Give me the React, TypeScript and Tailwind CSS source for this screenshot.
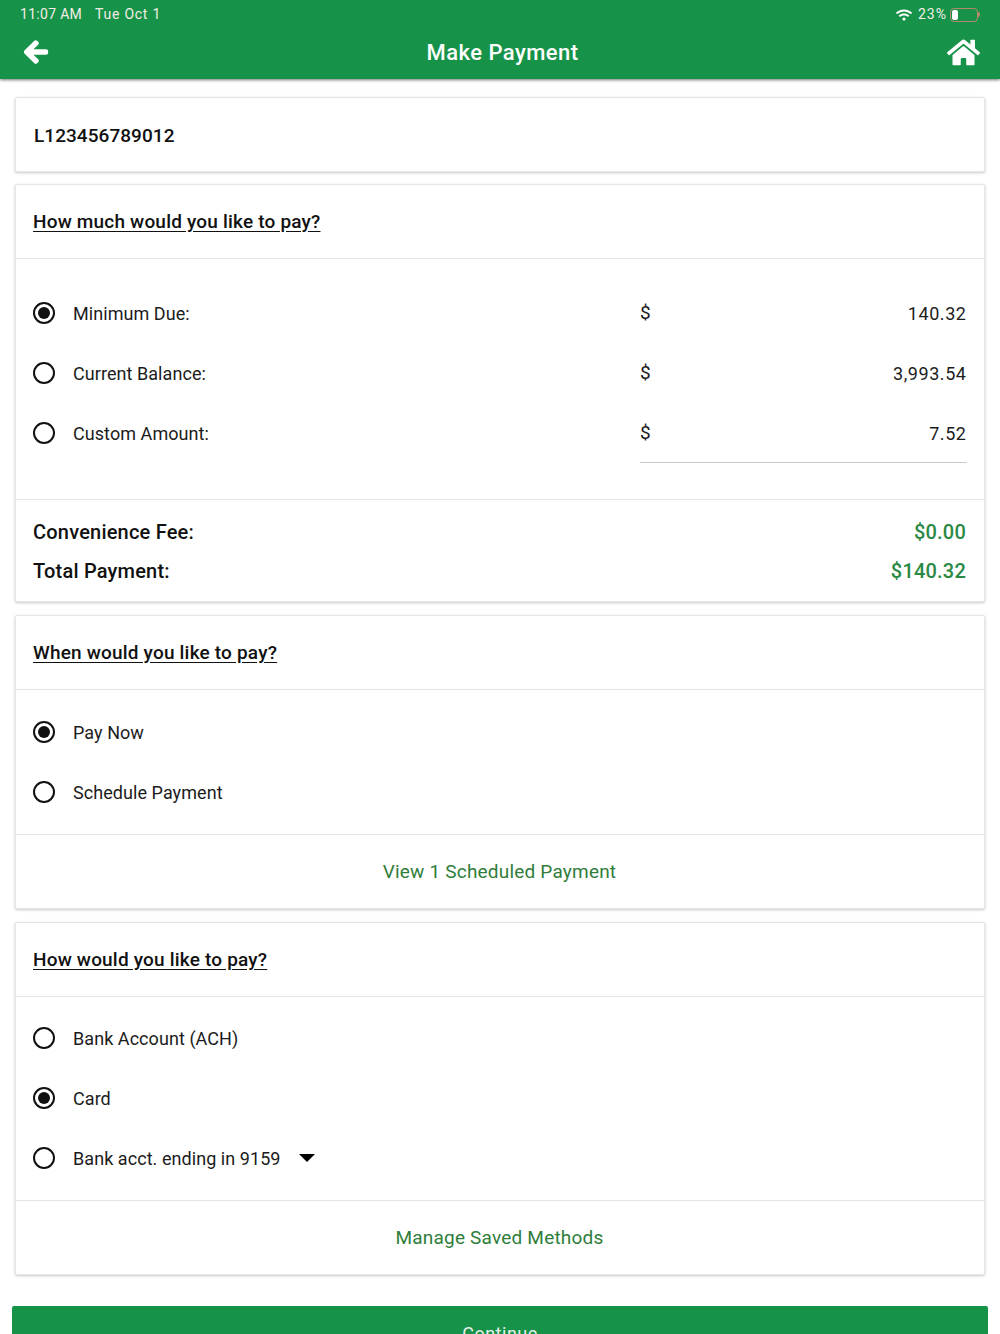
import React from 'react';
import { FaArrowLeft, FaHome, FaWifi } from 'react-icons/fa';

const Radio: React.FC<{ checked?: boolean }> = ({ checked }) => (
  <span className="w-[22px] h-[22px] flex-shrink-0 rounded-full border-[2.5px] border-[#111] flex items-center justify-center">
    {checked && <span className="w-[12px] h-[12px] rounded-full bg-[#111]" />}
  </span>
);

const RadioRow: React.FC<{ label: string; checked?: boolean; children?: React.ReactNode }> = ({ label, checked, children }) => (
  <div className="h-[60px] flex items-center px-[17px]">
    <Radio checked={checked} />
    <span className="ml-[18px] text-[18px] text-[#1c1c1c] tracking-[0.06px]">{label}</span>
    {children}
  </div>
);

const AmountRow: React.FC<{ label: string; value: string; checked?: boolean; underline?: boolean }> = ({ label, value, checked, underline }) => (
  <RadioRow label={label} checked={checked}>
    <div className="absolute left-[624px] w-[327px] h-[60px] flex items-center justify-between text-[18px] text-[#1c1c1c]">
      <span className="text-[19px] pt-[1px]">$</span>
      <span className="tracking-[0.55px] pr-[0.5px]">{value}</span>
      {underline && <span className="absolute left-0 right-0 bottom-0 h-px bg-[#c9c9c9]" />}
    </div>
  </RadioRow>
);

const Card: React.FC<{ children: React.ReactNode; className?: string }> = ({ children, className }) => (
  <div className={`mx-[15px] bg-white border border-[#e6e6e6] rounded-[2px] shadow-[0_1px_3px_rgba(0,0,0,0.22)] ${className ?? ''}`}>
    {children}
  </div>
);

const Title: React.FC<{ text: string }> = ({ text }) => (
  <div className="h-[74px] flex items-center px-[17px] pt-[1px] border-b border-[#e4e4e4]">
    <span className="text-[19px] font-medium text-[#111] tracking-[0.19px] underline underline-offset-[3px]">{text}</span>
  </div>
);

const LinkRow: React.FC<{ text: string }> = ({ text }) => (
  <div className="h-[74px] flex items-center justify-center pt-[2px] pr-[1px] border-t border-[#e4e4e4] text-[19px] text-[#2e7d3a] tracking-[0.2px]">
    {text}
  </div>
);

export default function App() {
  return (
    <div className="relative h-[1334px] overflow-hidden bg-white font-['Roboto',sans-serif]">
      <header className="relative h-[79px] bg-[#169348] text-white shadow-[0_1px_3px_rgba(0,0,0,0.55)]">
        <div className="h-[29px] flex items-center justify-between pl-[20px] pr-[20px] text-[14px] text-[#f3ede6] tracking-[0.3px]">
          <div className="flex gap-[13px]">
            <span>11:07 AM</span>
            <span className="tracking-[0.75px]">Tue Oct 1</span>
          </div>
          <div className="flex items-center">
            <FaWifi className="w-[16px] h-[16px] text-white" />
            <span className="ml-[6px] tracking-[1px]">23%</span>
            <span className="ml-[3px] w-[28px] h-[14px] rounded-[4px] border border-[#b58a6c] p-[1px] flex">
              <span className="w-[6px] bg-white rounded-[2px]" />
            </span>
            <span className="w-[2px] h-[5px] bg-[#b58a6c] rounded-r-[2px]" />
          </div>
        </div>
        <div className="relative h-[46px] flex items-center justify-between pl-[23px] pr-[20px]">
          <FaArrowLeft className="w-[26px] h-[26px]" stroke="currentColor" strokeWidth={30} />
          <span className="text-[22px] font-medium ml-[9px] tracking-[0.45px]">Make Payment</span>
          <FaHome className="w-[33px] h-[33px]" />
        </div>
      </header>

      <Card className="mt-[18px] h-[75px] flex items-center px-[18px] pt-[3px]">
        <span className="text-[19px] font-medium text-[#111] tracking-[0.05px]">L123456789012</span>
      </Card>

      <Card className="mt-[12px]">
        <Title text="How much would you like to pay?" />
        <div className="relative pt-[24px] pb-[36px] border-b border-[#e4e4e4]">
          <AmountRow label="Minimum Due:" value="140.32" checked />
          <AmountRow label="Current Balance:" value="3,993.54" />
          <AmountRow label="Custom Amount:" value="7.52" underline />
        </div>
        <div className="h-[101px] pl-[17px] pr-[18px] pt-[12px] text-[20px] font-medium text-[#111] tracking-[0.2px]">
          <div className="h-[39px] flex items-center justify-between">
            <span>Convenience Fee:</span>
            <span className="text-[#2a8a45]">$0.00</span>
          </div>
          <div className="h-[39px] flex items-center justify-between">
            <span>Total Payment:</span>
            <span className="text-[#2a8a45]">$140.32</span>
          </div>
        </div>
      </Card>

      <Card className="mt-[13px]">
        <Title text="When would you like to pay?" />
        <div className="pt-[12px] pb-[12px]">
          <RadioRow label="Pay Now" checked />
          <RadioRow label="Schedule Payment" />
        </div>
        <LinkRow text="View 1 Scheduled Payment" />
      </Card>

      <Card className="mt-[13px]">
        <Title text="How would you like to pay?" />
        <div className="pt-[11px] pb-[12px]">
          <RadioRow label="Bank Account (ACH)" />
          <RadioRow label="Card" checked />
          <RadioRow label="Bank acct. ending in 9159">
            <span className="ml-[18px] w-0 h-0 border-x-[8px] border-x-transparent border-t-[8px] border-t-black" />
          </RadioRow>
        </div>
        <LinkRow text="Manage Saved Methods" />
      </Card>

      <div className="mt-[31px] mx-[12px] h-[60px] pt-[14px] bg-[#169348] rounded-[2px] text-center text-[18px] text-[#e8efe9] tracking-[0.5px]">
        Continue
      </div>
    </div>
  );
}
